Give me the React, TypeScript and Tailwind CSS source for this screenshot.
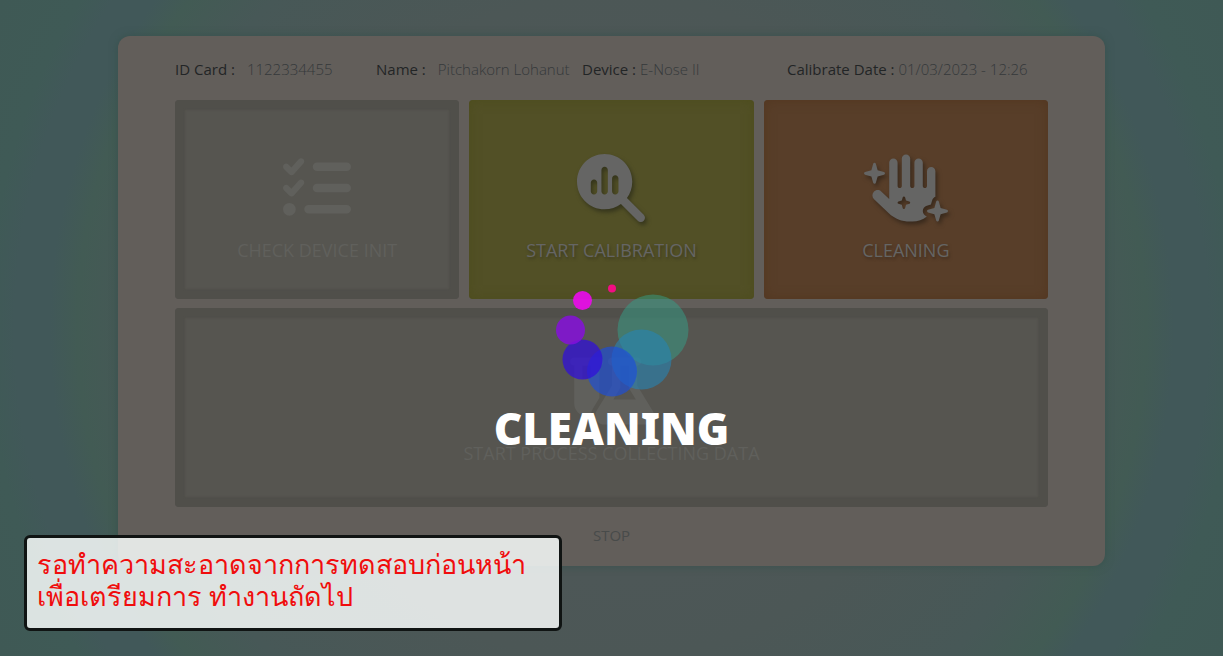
import type { ReactNode } from 'react';
import { FaFlaskVial, FaHandSparkles, FaListCheck, FaMagnifyingGlassChart } from 'react-icons/fa6';

function Field({ label, value, wide }: { label: string; value: string; wide?: boolean }) {
  return (
    <div className={wide ? 'flex gap-3 whitespace-nowrap' : 'flex gap-1 whitespace-nowrap'}>
      <dt className="font-medium text-[#222526]">{label} :</dt>
      <dd className="font-light text-[#35393a]">{value}</dd>
    </div>
  );
}

function Tile({ label, icon, tone, disabled }: { label: string; icon: ReactNode; tone: string; disabled?: boolean }) {
  return (
    <button
      type="button"
      disabled={disabled}
      className={`flex h-[199px] w-full flex-col items-center gap-3.5 rounded text-lg leading-7 ${tone}`}
    >
      {icon}
      <span>{label}</span>
    </button>
  );
}

const disabledTone = 'bg-[#565550] text-[#60605c] shadow-[inset_0_0_2px_10px_#504f4a]';

export default function App() {
  return (
    <div className="relative min-h-screen bg-[radial-gradient(circle_at_center,#50575a_0%,#4c5756_48%,#475857_68%,#425b54_77%,#415859_81%,#415859_86%,#3f5a56_90%,#3f5955_100%)] px-[118px] pt-9 pb-[90px] font-['Open_Sans','Noto_Sans',sans-serif]">
      <main className="rounded-xl bg-[#625e5a] px-[57px] pt-[21px] pb-[19px] shadow-[0_0_8px_#37514d]">
        <dl className="grid grid-cols-[201fr_206fr_205fr_261fr] text-[15px] leading-6">
          <Field label="ID Card" value="1122334455" wide />
          <Field label="Name" value="Pitchakorn Lohanut" wide />
          <Field label="Device" value="E-Nose II" />
          <Field label="Calibrate Date" value="01/03/2023 - 12:26" />
        </dl>
        <div className="mt-[19px] grid grid-cols-3 gap-x-[10px] gap-y-[9px]">
          <Tile
            disabled
            label="CHECK DEVICE INIT"
            tone={`pt-[54px] ${disabledTone}`}
            icon={<FaListCheck className="h-[68px] w-[68px]" />}
          />
          <Tile
            label="START CALIBRATION"
            tone="bg-[#525026] pt-[54px] text-[#656564] shadow-[inset_0_0_12px_#4d4d1d] [text-shadow:1px_2px_3px_#3c3b20]"
            icon={<FaMagnifyingGlassChart className="h-[68px] w-[68px] drop-shadow-[2px_3px_2px_#35351c]" />}
          />
          <Tile
            label="CLEANING"
            tone="bg-[#583e29] pt-[54px] text-[#656564] shadow-[inset_0_0_12px_#533720] [text-shadow:1px_2px_3px_#402e20]"
            icon={<FaHandSparkles className="h-[68px] w-[84px] drop-shadow-[2px_3px_2px_#38291c]" />}
          />
          <div className="col-span-3">
            <Tile
              disabled
              label="START PROCESS COLLECTING DATA"
              tone={`pt-[49px] ${disabledTone}`}
              icon={<FaFlaskVial className="h-[68px] w-[84px]" />}
            />
          </div>
        </div>
        <button type="button" className="mx-auto mt-4 block text-[15px] leading-6 text-[#484b4a]">
          STOP
        </button>
      </main>

      <div role="status" className="absolute inset-x-0 top-[280px] flex flex-col items-center">
        <svg viewBox="0 0 140 120" className="h-[120px] w-[140px] overflow-visible" aria-hidden="true">
          <circle cx="111" cy="50" r="35.500" fill="#33a088" fillOpacity="0.5" />
          <circle cx="99.500" cy="79.500" r="30" fill="#2684b4" fillOpacity="0.6" />
          <circle cx="70" cy="91.500" r="25" fill="#1c4ddb" fillOpacity="0.66" />
          <circle cx="40.500" cy="79.500" r="20" fill="#310fd9" fillOpacity="0.74" />
          <circle cx="28.500" cy="50" r="14.500" fill="#850fdc" fillOpacity="0.84" />
          <circle cx="40.500" cy="20.500" r="9.500" fill="#e60ee5" fillOpacity="0.94" />
          <circle cx="70" cy="8.500" r="4" fill="#f20d83" />
        </svg>
        <p className="font-['Noto_Sans','Open_Sans',sans-serif] text-[44px] leading-[56px] font-black text-white">CLEANING</p>
      </div>

      <aside className="absolute top-[535px] left-6 h-24 w-[538px] rounded-md border-3 border-[#101413] bg-[#fbfffe]/83 px-2.5 pt-2.5 text-[27px] leading-8 text-[#f00d0d]">
        <p>
          รอทำความสะอาดจากการทดสอบก่อนหน้า
          <br />
          เพื่อเตรียมการ ทำงานถัดไป
        </p>
      </aside>
    </div>
  );
}
